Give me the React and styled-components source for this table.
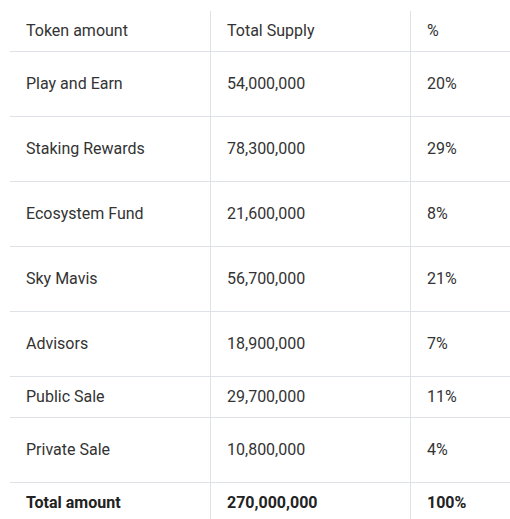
import React from "react";
import styled, { createGlobalStyle } from "styled-components";

const ink = "#333333";
const rule = "#dee2e6";

const GlobalStyle = createGlobalStyle`
  body {
    margin: 0;
    background: #ffffff;
    font-family: Roboto, "Noto Sans", Arial, sans-serif;
  }
`;

const Page = styled.div`
  padding: 11px 0 0 10px;
  width: 500px;
`;

const Table = styled.div`
  display: flex;
  flex-direction: column;
  width: 100%;
`;

const Row = styled.div`
  display: grid;
  grid-template-columns: 200px 200px 1fr;
  min-height: ${(props) => (props.tall ? "64px" : "40px")};
  border-bottom: ${(props) => (props.last ? "none" : `1px solid ${rule}`)};
`;

const Cell = styled.div`
  display: flex;
  align-items: center;
  padding: 8px 16px;
  font-size: 16px;
  line-height: 24px;
  color: ${(props) => (props.bold ? "#222" : ink)};
  font-weight: ${(props) => (props.bold ? 700 : 400)};
  & + & {
    border-left: 1px solid ${rule};
  }
`;

const rows = [
  { name: "Play and Earn", supply: "54,000,000", pct: "20%", tall: true },
  { name: "Staking Rewards", supply: "78,300,000", pct: "29%", tall: true },
  { name: "Ecosystem Fund", supply: "21,600,000", pct: "8%", tall: true },
  { name: "Sky Mavis", supply: "56,700,000", pct: "21%", tall: true },
  { name: "Advisors", supply: "18,900,000", pct: "7%", tall: true },
  { name: "Public Sale", supply: "29,700,000", pct: "11%", tall: false },
  { name: "Private Sale", supply: "10,800,000", pct: "4%", tall: true },
];

const App = () => {
  return (
    <Page>
      <GlobalStyle />
      <Table>
        <Row>
          <Cell>Token amount</Cell>
          <Cell>Total Supply</Cell>
          <Cell>%</Cell>
        </Row>
        {rows.map((r) => (
          <Row key={r.name} tall={r.tall}>
            <Cell>{r.name}</Cell>
            <Cell>{r.supply}</Cell>
            <Cell>{r.pct}</Cell>
          </Row>
        ))}
        <Row last>
          <Cell bold>Total amount</Cell>
          <Cell bold>270,000,000</Cell>
          <Cell bold>100%</Cell>
        </Row>
      </Table>
    </Page>
  );
};

export default App;
